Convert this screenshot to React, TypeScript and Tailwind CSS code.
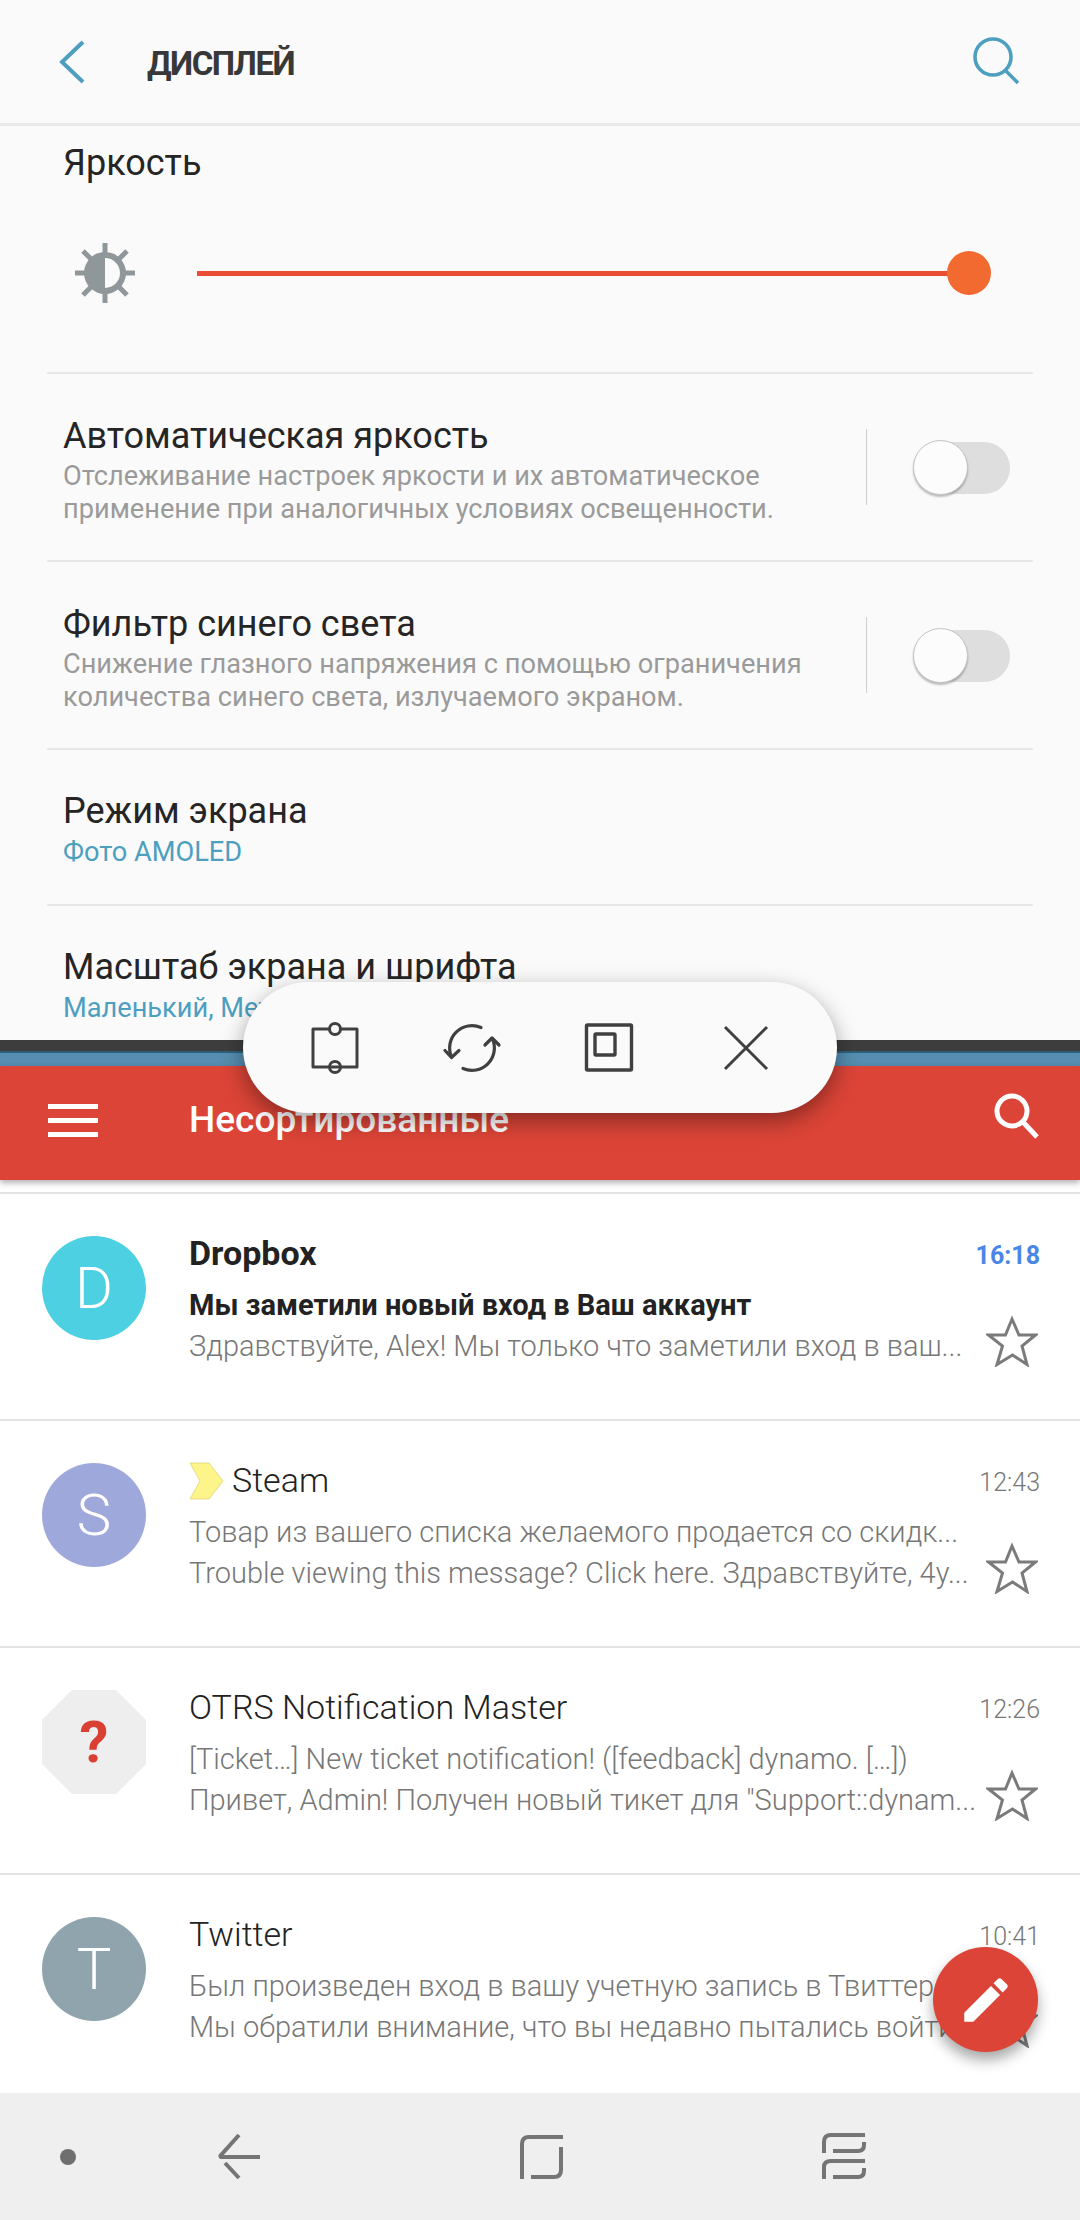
import React from 'react';

const font = { fontFamily: 'Roboto, "Noto Sans", sans-serif' };

const BrightnessIcon = () => (
  <svg width="60" height="60" viewBox="0 0 60 60" fill="none">
    <path d="M30 0V12M30 48V60M0 30H12M48 30H60M8 8L16 16M52 8L44 16M8 52L16 44M52 52L44 44" stroke="#8f979b" strokeWidth="5" />
    <circle cx="30" cy="30" r="21" fill="#8f979b" />
    <path d="M30 15A15 15 0 0 1 30 45Z" fill="#fafafa" />
  </svg>
);

const Toggle = () => (
  <div className="relative ml-[46px] h-[55px] w-[97px]">
    <div className="absolute right-0 top-[2px] h-[52px] w-[88px] rounded-full bg-[#dedede]" />
    <div className="absolute left-0 top-0 h-[55px] w-[55px] rounded-full border border-[#c4c4c4] bg-[#fcfcfc] shadow-[0_2px_2px_rgba(0,0,0,0.25)]" />
  </div>
);

const ToggleRow = ({ title, lines }: { title: string; lines: string[] }) => (
  <div className="mx-[47px] flex h-[188px] border-b-2 border-[#e8e8e8] pl-[16px] pt-[43px]">
    <div className="w-[803px] shrink-0">
      <div className="text-[36px] leading-[38px] text-[#252525]">{title}</div>
      <div className="mt-[5px] text-[27.2px] leading-[33px] text-[#9a9a9a]">
        {lines.map(line => (
          <div key={line} className="whitespace-nowrap">{line}</div>
        ))}
      </div>
    </div>
    <div className="mt-[12px] flex h-[76px] items-center">
      <div className="h-[76px] w-px bg-[#cfcfcf]" />
      <Toggle />
    </div>
  </div>
);

const Star = () => (
  <svg width="52" height="52" viewBox="0 0 52 52" fill="none" className="shrink-0">
    <path d="M26 4L33 20H49.5L36 31L41 49.5L26.5 40L11 49.5L16.5 31L2.5 20H19.5Z" stroke="#7b7b7b" strokeWidth="3" strokeLinejoin="miter" />
  </svg>
);

const Avatar = ({ letter, color }: { letter: string; color: string }) => (
  <div className={`flex h-[104px] w-[104px] shrink-0 items-center justify-center rounded-full text-[58px] font-light leading-none text-white ${color}`}>
    {letter}
  </div>
);

const Octagon = () => (
  <div className="relative flex h-[104px] w-[104px] shrink-0 items-center justify-center">
    <svg width="104" height="104" viewBox="0 0 104 104" className="absolute inset-0">
      <polygon points="30,0 74,0 104,30 104,74 74,104 30,104 0,74 0,30" fill="#eeeeee" />
    </svg>
    <span className="relative text-[58px] font-bold leading-none text-[#d93f32]">?</span>
  </div>
);

const MailRow = ({
  avatar,
  name,
  time,
  lines,
  unread,
  tag,
}: {
  avatar: React.ReactNode;
  name: string;
  time: string;
  lines: string[];
  unread?: boolean;
  tag?: boolean;
}) => (
  <div className="flex h-[227px] border-b-2 border-[#e4e4e4] pl-[42px] pr-[40px]">
    <div className="mt-[42px]">{avatar}</div>
    <div className="ml-[43px] min-w-0 flex-1 pt-[39px]">
      <div className="flex h-[41px] items-center justify-between">
        <div className={`flex items-center text-[34px] leading-[41px] text-[#222222] ${unread ? 'font-bold' : 'font-light'}`}>
          {tag && (
            <svg width="35" height="38" viewBox="0 0 35 38" className="mr-[8px]">
              <path d="M1 1H20L34 19L20 37H1L11 19Z" fill="#fdf58a" stroke="#e6dd83" strokeWidth="1" />
            </svg>
          )}
          {name}
        </div>
        <div className={`pt-[4px] text-[25px] ${unread ? 'font-bold text-[#4a86e8]' : 'font-light text-[#777777]'}`}>{time}</div>
      </div>
      <div className="mt-[11px] flex">
        <div className="w-[797px] shrink-0 text-[29px] leading-[41px]">
          {lines.map((line, i) => (
            <div
              key={line}
              className={`whitespace-nowrap ${unread && i === 0 ? 'font-bold text-[#222222]' : 'font-light text-[#777777]'}`}
            >
              {line}
            </div>
          ))}
        </div>
        <div className="mt-[30px]">
          <Star />
        </div>
      </div>
    </div>
  </div>
);

const ToolPill = () => (
  <div className="absolute left-[243px] top-[982px] z-20 grid h-[131px] w-[594px] grid-cols-[137px_137px_137px_137px] content-center justify-center rounded-full bg-[#fafafa] shadow-[0_8px_22px_rgba(0,0,0,0.38)]">
    <div className="flex justify-center">
      <svg width="60" height="60" viewBox="0 0 60 60" fill="none" stroke="#404040" strokeWidth="3" strokeLinejoin="round">
        <path d="M24 11H8V49H52V11H36M24 49H36" />
        <circle cx="30" cy="11" r="5.5" />
        <circle cx="30" cy="49" r="5.5" />
      </svg>
    </div>
    <div className="flex justify-center">
      <svg width="60" height="60" viewBox="0 0 60 60" fill="none" stroke="#404040" strokeWidth="3.2" strokeLinecap="round" strokeLinejoin="round">
        <path d="M39 9.5A22.4 22.4 0 0 0 9.5 39" />
        <path d="M3 32.5L9.5 39.5L17 32.5" />
        <path d="M21 50.5A22.4 22.4 0 0 0 50.5 21" />
        <path d="M43 27L50 20L57 27" />
      </svg>
    </div>
    <div className="flex justify-center">
      <svg width="60" height="60" viewBox="0 0 60 60" fill="none" stroke="#404040" strokeWidth="3.4" strokeLinejoin="round">
        <rect x="7.5" y="7" width="45" height="45" rx="1" />
        <rect x="16" y="16" width="20" height="21" rx="1" />
      </svg>
    </div>
    <div className="flex justify-center">
      <svg width="60" height="60" viewBox="0 0 60 60" fill="none" stroke="#404040" strokeWidth="3">
        <path d="M9 9L51 51M51 9L9 51" />
      </svg>
    </div>
  </div>
);

export default function App() {
  return (
    <div style={font} className="relative flex h-[2220px] w-[1080px] flex-col overflow-hidden bg-white">
      {/* Settings panel */}
      <div className="h-[1040px] shrink-0 overflow-hidden bg-[#fafafa]">
        <div className="flex h-[126px] items-center justify-between border-b-[3px] border-[#e8e8e8] pl-[58px] pr-[60px]">
          <div className="flex items-center">
            <svg width="28" height="44" viewBox="0 0 28 44" fill="none" stroke="#4d9fc0" strokeWidth="4">
              <path d="M25 2L4 22L25 42" />
            </svg>
            <span className="ml-[61px] mt-[3px] text-[33px] font-bold leading-none tracking-[-1.5px] text-[#383838]">ДИСПЛЕЙ</span>
          </div>
          <svg width="48" height="48" viewBox="0 0 48 48" fill="none" stroke="#4d9fc0" strokeWidth="3.6" className="-mt-[1px]">
            <circle cx="21" cy="20" r="18" />
            <path d="M33 33L46 46" />
          </svg>
        </div>

        <div className="mx-[47px] h-[248px] border-b-2 border-[#e8e8e8]">
          <div className="pl-[16px] pt-[18px] text-[36px] leading-[38px] text-[#252525]">Яркость</div>
          <div className="mt-[61px] flex h-[60px] items-center pl-[28px] pr-[42px]">
            <BrightnessIcon />
            <div className="ml-[62px] flex flex-1 items-center">
              <div className="h-[5px] flex-1 bg-[#e94e35]" />
              <div className="-ml-px h-[44px] w-[44px] rounded-full bg-[#f26a30]" />
            </div>
          </div>
        </div>

        <ToggleRow title="Автоматическая яркость" lines={['Отслеживание настроек яркости и их автоматическое', 'применение при аналогичных условиях освещенности.']} />
        <ToggleRow title="Фильтр синего света" lines={['Снижение глазного напряжения с помощью ограничения', 'количества синего света, излучаемого экраном.']} />

        <div className="mx-[47px] h-[156px] border-b-2 border-[#e8e8e8] pl-[16px] pt-[42px]">
          <div className="text-[36px] leading-[38px] text-[#252525]">Режим экрана</div>
          <div className="mt-[6px] text-[27.2px] leading-[33px] text-[#4d9fc0]">Фото AMOLED</div>
        </div>
        <div className="mx-[47px] pl-[16px] pt-[42px]">
          <div className="text-[36px] leading-[38px] text-[#252525]">Масштаб экрана и шрифта</div>
          <div className="mt-[6px] text-[27.2px] leading-[33px] text-[#4d9fc0]">Маленький, Метрика</div>
        </div>
      </div>

      {/* Split divider */}
      <div className="h-[13px] shrink-0 border-b-2 border-[#2f5f7a] bg-[#3d3d3d]" />
      <div className="h-[13px] shrink-0 bg-[#568db0]" />

      {/* Mail toolbar */}
      <div className="relative z-10 flex h-[114px] shrink-0 items-start justify-between bg-[#db4437] pl-[48px] pr-[40px] shadow-[0_3px_6px_rgba(0,0,0,0.3)]">
        <div className="flex items-center pt-[34px]">
          <div className="flex w-[50px] flex-col gap-[9px]">
            <div className="h-[5px] bg-white" />
            <div className="h-[5px] bg-white" />
            <div className="h-[5px] bg-white" />
          </div>
          <span className="ml-[91px] text-[37px] font-medium leading-[40px] text-white">Несортированные</span>
        </div>
        <svg width="46" height="46" viewBox="0 0 46 46" fill="none" stroke="#ffffff" strokeWidth="5" className="mt-[27px]">
          <circle cx="18" cy="18" r="15" />
          <path d="M29 29L43 44" />
        </svg>
      </div>

      {/* Mail list */}
      <div className="h-[913px] shrink-0 overflow-hidden">
        <div className="h-[14px] border-b-2 border-[#e4e4e4]" />
        <MailRow
          avatar={<Avatar letter="D" color="bg-[#4dd0e1]" />}
          name="Dropbox"
          time="16:18"
          unread
          lines={['Мы заметили новый вход в Ваш аккаунт', 'Здравствуйте, Alex! Мы только что заметили вход в ваш...']}
        />
        <MailRow
          avatar={<Avatar letter="S" color="bg-[#9fa8da]" />}
          name="Steam"
          time="12:43"
          tag
          lines={['Товар из вашего списка желаемого продается со скидк...', 'Trouble viewing this message? Click here. Здравствуйте, 4y...']}
        />
        <MailRow
          avatar={<Octagon />}
          name="OTRS Notification Master"
          time="12:26"
          lines={['[Ticket…] New ticket notification! ([feedback] dynamo. […])', 'Привет, Admin! Получен новый тикет для "Support::dynam...']}
        />
        <MailRow
          avatar={<Avatar letter="T" color="bg-[#90a4ae]" />}
          name="Twitter"
          time="10:41"
          lines={['Был произведен вход в вашу учетную запись в Твиттере', 'Мы обратили внимание, что вы недавно пытались войти в']}
        />
      </div>

      {/* Navigation bar */}
      <div className="flex h-[127px] flex-1 items-center bg-[#efefef]">
        <div className="ml-[60px] h-[16px] w-[16px] rounded-full bg-[#6f6f6f]" />
        <svg width="46" height="48" viewBox="0 0 46 48" fill="none" stroke="#757575" strokeWidth="4" className="ml-[140px]">
          <path d="M23 2L5 22Q4 23 5 24H44M9 30L23 45" />
        </svg>
        <svg width="46" height="48" viewBox="0 0 46 48" fill="none" stroke="#757575" strokeWidth="4" className="ml-[256px]">
          <path d="M4 46V11Q4 4 11 4H45M43 14V37Q43 44 36 44H13" />
        </svg>
        <svg width="46" height="48" viewBox="0 0 46 48" fill="none" stroke="#757575" strokeWidth="4" className="ml-[257px]">
          <path d="M3 20V9Q3 2 10 2H44M43 9V12Q43 18 37 18H12M3 46V34Q3 28 10 28H44M43 35V38Q43 44 37 44H12" />
        </svg>
      </div>

      <ToolPill />

      {/* Compose button */}
      <div className="absolute left-[933px] top-[1947px] flex h-[105px] w-[105px] items-center justify-center rounded-full bg-[#db4437] shadow-[0_8px_14px_rgba(0,0,0,0.35)]">
        <svg width="58" height="58" viewBox="0 0 24 24" fill="#ffffff">
          <path d="M3 17.25V21h3.75L17.81 9.94l-3.75-3.75L3 17.25zM20.71 7.04c.39-.39.39-1.02 0-1.41l-2.34-2.34c-.39-.39-1.02-.39-1.41 0l-1.83 1.83 3.75 3.75 1.83-1.83z" />
        </svg>
      </div>
    </div>
  );
}
